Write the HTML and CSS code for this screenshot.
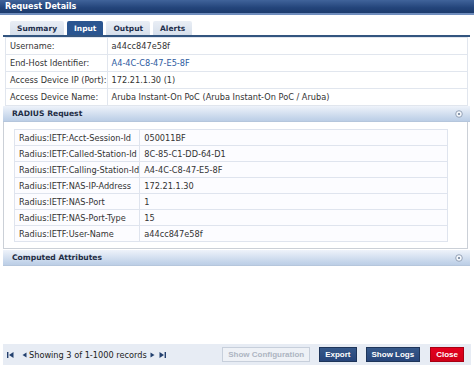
FILE: index.html
```html
<!DOCTYPE html>
<html>
<head>
<meta charset="utf-8">
<link rel="stylesheet" href="styles.css">
</head>
<body>
<div class="window">
  <div class="titlebar">Request Details</div>
  <div class="content">
    <div class="tabs">
      <span class="tab">Summary</span>
      <span class="tab active">Input</span>
      <span class="tab">Output</span>
      <span class="tab">Alerts</span>
    </div>
    <table class="info">
      <tr><td class="key">Username:</td><td>a44cc847e58f</td></tr>
      <tr><td class="key">End-Host Identifier:</td><td class="link">A4-4C-C8-47-E5-8F</td></tr>
      <tr><td class="key">Access Device IP (Port):</td><td>172.21.1.30 (1)</td></tr>
      <tr><td class="key">Access Device Name:</td><td>Aruba Instant-On PoC (Aruba Instant-On PoC / Aruba)</td></tr>
    </table>
    <div class="section-head">
      <span>RADIUS Request</span>
      <svg class="toggle" width="8" height="8" viewBox="0 0 8 8"><circle cx="4" cy="4" r="3.3" fill="#f4f7fb" stroke="#8c9bb1" stroke-width="0.9"/><circle cx="4" cy="4" r="1.1" fill="#6f8099"/></svg>
    </div>
    <div class="panel">
      <table class="attrs">
        <tr><td class="key">Radius:IETF:Acct-Session-Id</td><td>050011BF</td></tr>
        <tr><td class="key">Radius:IETF:Called-Station-Id</td><td>8C-85-C1-DD-64-D1</td></tr>
        <tr><td class="key">Radius:IETF:Calling-Station-Id</td><td>A4-4C-C8-47-E5-8F</td></tr>
        <tr><td class="key">Radius:IETF:NAS-IP-Address</td><td>172.21.1.30</td></tr>
        <tr><td class="key">Radius:IETF:NAS-Port</td><td>1</td></tr>
        <tr><td class="key">Radius:IETF:NAS-Port-Type</td><td>15</td></tr>
        <tr><td class="key">Radius:IETF:User-Name</td><td>a44cc847e58f</td></tr>
      </table>
    </div>
    <div class="section-head">
      <span>Computed Attributes</span>
      <svg class="toggle" width="8" height="8" viewBox="0 0 8 8"><circle cx="4" cy="4" r="3.3" fill="#f4f7fb" stroke="#8c9bb1" stroke-width="0.9"/><circle cx="4" cy="4" r="1.1" fill="#6f8099"/></svg>
    </div>
  </div>
  <div class="footer">
    <div class="pager">
      <svg class="pg first" width="7" height="6" viewBox="0 0 7 6"><rect x="0" y="0" width="1.4" height="6" fill="#23406e"/><polygon points="6.5,0 6.5,6 2,3" fill="#23406e"/></svg>
      <svg class="pg prev" width="5" height="6" viewBox="0 0 5 6"><polygon points="4.5,0.5 4.5,5.5 0.5,3" fill="#23406e"/></svg>
      <span class="pager-text">Showing 3 of 1-1000 records</span>
      <svg class="pg next" width="5" height="6" viewBox="0 0 5 6"><polygon points="0.5,0.5 0.5,5.5 4.5,3" fill="#23406e"/></svg>
      <svg class="pg last" width="7" height="6" viewBox="0 0 7 6"><polygon points="0.5,0 0.5,6 5,3" fill="#23406e"/><rect x="5.6" y="0" width="1.4" height="6" fill="#23406e"/></svg>
    </div>
    <div class="buttons">
      <span class="btn disabled">Show Configuration</span>
      <span class="btn primary">Export</span>
      <span class="btn primary">Show Logs</span>
      <span class="btn danger">Close</span>
    </div>
  </div>
</div>
</body>
</html>
```
FILE: styles.css
```css
html, body {
  margin: 0;
  padding: 0;
  background: #ffffff;
}
body {
  font-family: "DejaVu Sans", Verdana, sans-serif;
  font-size: 8.2px;
  color: #333;
}
.window {
  width: 474px;
  height: 370px;
  display: flex;
  flex-direction: column;
  overflow: hidden;
}
.titlebar {
  height: 13px;
  line-height: 13px;
  padding-left: 5px;
  color: #fff;
  font-weight: bold;
  font-size: 8px;
  background: linear-gradient(#40639a, #23447a 60%, #1c3b6c);
  border-bottom: 2px solid #6f8dbd;
}
.content {
  padding: 0 4px 0 3px;
}
.tabs {
  display: flex;
  gap: 3px;
  margin-top: 6px;
  padding-left: 7px;
  border-bottom: 2px solid #33557f;
}
.tab {
  height: 14px;
  line-height: 15px;
  padding: 0 7px;
  font-size: 7.5px;
  font-weight: bold;
  color: #1e2f4b;
  background: linear-gradient(#e9eef5, #d6dfeb);
  border-radius: 2px 2px 0 0;
}
.tab.active {
  background: #2a5590;
  color: #fff;
}
table {
  border-collapse: collapse;
}
.info {
  width: 463px;
  margin: 0 1px 0 2px;
}
.info td {
  height: 16px;
  padding: 0 0 0 4px;
  border: 1px solid #e1e6ee;
  white-space: nowrap;
}
.info td.key {
  width: 96px;
}
.info td.link {
  color: #2c5aa0;
}
.section-head {
  height: 15px;
  display: flex;
  align-items: center;
  justify-content: space-between;
  padding: 0 7px 0 9px;
  background: linear-gradient(#eef3fa, #c4d5ea 80%, #bccee6);
  border-bottom: 1px solid #b5c6dc;
  font-weight: bold;
  font-size: 7.6px;
  color: #1f2d45;
}
.panel {
  border: 1px solid #cbd0d7;
  border-top: none;
  margin: 0 2px 1px 0;
  padding: 7px 19px 6px 10px;
}
.attrs {
  width: 100%;
}
.attrs td {
  height: 15px;
  padding: 0 0 0 4px;
  border: 1px solid #dfe4ee;
  background: #fcfcff;
  white-space: nowrap;
}
.attrs td.key {
  width: 119px;
}
.footer {
  margin: auto 3px 5px 3px;
  height: 21px;
  background: #e7ecf4;
  display: flex;
  align-items: center;
  justify-content: space-between;
  padding: 0 7px 0 4px;
}
.pager {
  display: flex;
  align-items: center;
}
.pg.prev {
  margin-left: 8px;
}
.pager-text {
  margin: 0 3px 0 2px;
  color: #222;
}
.pg.last {
  margin-left: 4px;
}
.buttons {
  display: flex;
  gap: 9px;
}
.btn {
  height: 13px;
  line-height: 13px;
  padding: 0 5px;
  font-family: "Liberation Sans", Arial, sans-serif;
  font-weight: bold;
  font-size: 8px;
  color: #fff;
  border: 1px solid transparent;
}
.btn.disabled {
  background: #eef1f6;
  border-color: #c7cfdb;
  color: #adb5c2;
}
.btn.primary {
  background: linear-gradient(#36588a, #27457a);
  border-color: #1e355a;
}
.btn.danger {
  background: linear-gradient(#e4001e, #cf0018);
  border-color: #a80012;
  margin-left: 1px;
}
```
